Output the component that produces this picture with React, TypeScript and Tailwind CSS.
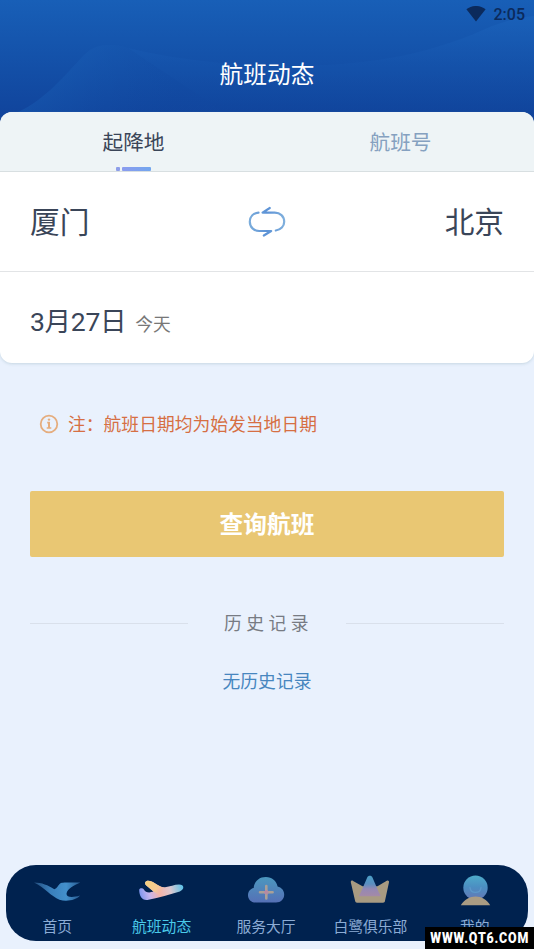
import React from 'react';

// ── Icons ────────────────────────────────────────

const IconWifi = () => (
  <svg width="20" height="16" viewBox="0 0 20 16" fill="#0b2a5c">
    <path d="M.4 3.2C6-1.1 14-1.1 19.6 3.2L10 15.4z" />
  </svg>
);

const IconSwap = () => (
  <svg width="40" height="32" viewBox="0 0 40 32" fill="none" strokeWidth="2.2" strokeLinecap="round" strokeLinejoin="round">
    <defs>
      <linearGradient id="swap" x1="0" y1="0" x2="40" y2="0" gradientUnits="userSpaceOnUse">
        <stop stopColor="#7fb0dc" />
        <stop offset=".5" stopColor="#5c92d6" />
        <stop offset="1" stopColor="#85b4de" />
      </linearGradient>
    </defs>
    <path stroke="url(#swap)" d="M11.500 6.700C6.200 7.200 2.800 10.800 2.800 15.700c0 5.400 4.100 9.300 9.400 9.300h12l-7.400 4.500" />
    <path stroke="url(#swap)" d="M28.800 24.500c5-.6 8.400-4.300 8.400-8.800 0-5.400-4.100-9.100-9.400-9.100H15.500L22.800 2" />
  </svg>
);

const IconInfo = () => (
  <svg width="20" height="20" viewBox="0 0 20 20" fill="none" stroke="#e5ad7e">
    <circle cx="10" cy="10" r="8.3" strokeWidth="1.8" />
    <path d="M8.200 8.600H10v5.200M7.700 14h4.600" strokeWidth="1.600" />
    <path d="M10 8v6" strokeWidth="2" />
    <circle cx="10" cy="5.600" r="1.200" fill="#e5ad7e" stroke="none" />
  </svg>
);

const IconBird = () => (
  <svg width="50" height="32" viewBox="0 0 50 32">
    <defs>
      <linearGradient id="bird" x1="2" y1="0" x2="48" y2="0" gradientUnits="userSpaceOnUse">
        <stop stopColor="#244f80" />
        <stop offset=".35" stopColor="#397eba" />
        <stop offset=".7" stopColor="#4390cc" />
        <stop offset="1" stopColor="#285b91" />
      </linearGradient>
    </defs>
    <path fill="url(#bird)" d="M2 8.500c8 0 13.700 2.800 20.300 6.700 3-.8 3.500-3.700 6.200-5.900C30.200 8.200 41 8.700 48.300 8.500 43 11.200 35.200 14 34.500 19.800c-.1 3.700 6.300 4 13.500 1.700-3.500 4.500-13.500 6.600-20.500 4.200C19.200 22.500 12.500 13.500 2 8.500z" />
  </svg>
);

const IconPlane = () => (
  <svg width="50" height="32" viewBox="0 0 50 32">
    <defs>
      <linearGradient id="plane" x1="3" y1="24" x2="46" y2="12" gradientUnits="userSpaceOnUse">
        <stop stopColor="#7994f0" />
        <stop offset=".22" stopColor="#c6b5ef" />
        <stop offset=".45" stopColor="#f4b3a8" />
        <stop offset=".7" stopColor="#dcc8d0" />
        <stop offset="1" stopColor="#59c2e8" />
      </linearGradient>
      <linearGradient id="wing" x1="10" y1="8" x2="25" y2="20" gradientUnits="userSpaceOnUse">
        <stop stopColor="#f5cf80" />
        <stop offset=".6" stopColor="#f5c994" />
        <stop offset="1" stopColor="#f2b6a5" stopOpacity="0" />
      </linearGradient>
    </defs>
    <path fill="url(#plane)" d="M2.200 16c0-2.200 3.400-2.300 4.500-.7 1.300 2.200 3 3.200 5.500 3.200l4.300-1-7.200-6c-2.200-2-1.200-4.800 2-4.700 2.300.1 4.500 1.200 6.500 2.400 3.600 2 6.200 4.200 10.200 4 5-.3 9.300-2.600 14-2.600 5.800 0 5.500 5.300.8 6.800-10.300 3.300-20.300 6-31.300 8.300C5.200 27.100 2.200 22 2.200 16z" />
    <path fill="url(#wing)" d="m16.500 17.500-7.200-6c-2.200-2-1.200-4.800 2-4.700 2.300.1 4.500 1.200 6.500 2.400 3.600 2 6.200 4.200 10.200 4l-6 7.700z" />
  </svg>
);

const IconCloud = () => (
  <svg width="50" height="32" viewBox="0 0 50 32">
    <defs>
      <linearGradient id="cloud" x1="25" y1="3" x2="25" y2="28" gradientUnits="userSpaceOnUse">
        <stop stopColor="#4b98bf" />
        <stop offset="1" stopColor="#5571b6" />
      </linearGradient>
    </defs>
    <path fill="url(#cloud)" d="M14.500 28.500C10 28.500 7 25.300 7 21.200c0-3.500 2.200-6.500 5.700-7.200C13.200 7.200 18.300 3 24.800 3c6.200 0 10.700 4 11.800 9.500 3.900.9 6.600 4.100 6.600 8 0 4.600-3.400 8-8.200 8z" />
    <path stroke="#a9a098" strokeWidth="2.600" strokeLinecap="round" d="M25.300 12v12.500M19 18.200h12.600" />
    <path stroke="#b58aa4" strokeWidth="2.600" d="M25.300 16v4.500M23 18.200h4.600" />
  </svg>
);

const IconCrown = () => (
  <svg width="50" height="32" viewBox="0 0 50 32">
    <defs>
      <linearGradient id="crown" x1="25" y1="2" x2="25" y2="22" gradientUnits="userSpaceOnUse">
        <stop stopColor="#4b9fc7" />
        <stop offset=".4" stopColor="#5b8ec0" />
        <stop offset=".65" stopColor="#9488b4" />
        <stop offset="1" stopColor="#a48aa7" />
      </linearGradient>
    </defs>
    <path fill="#a89b82" d="M5.800 8.200c-.2-1.400 1.200-2 2.300-1.300l9.400 5.300h15l9.300-5.400c1.200-.7 2.500.1 2.200 1.500l-4.100 19c-.2 1-.8 1.400-1.800 1.400H12c-1 0-1.600-.5-1.800-1.400z" />
    <path fill="url(#crown)" d="M14.800 22.300c-.8 0-1-.7-.5-1.300 2.200-3.200 5.700-12.800 7.800-17.300 1-2.600 4.500-2.600 5.500 0 2.100 4.500 5.600 14.100 7.800 17.300.4.700.2 1.300-.6 1.300z" />
  </svg>
);

const IconUser = () => (
  <svg width="50" height="32" viewBox="0 0 50 32">
    <defs>
      <linearGradient id="head" x1="25" y1="1" x2="25" y2="25" gradientUnits="userSpaceOnUse">
        <stop stopColor="#4eadca" />
        <stop offset=".5" stopColor="#4b8ec2" />
        <stop offset="1" stopColor="#6379b6" />
      </linearGradient>
    </defs>
    <circle cx="25.500" cy="13.700" r="12.200" fill="url(#head)" />
    <path d="M20 13.500c.5 6.500 10.500 6.500 11 0" fill="none" stroke="#5c98ca" strokeWidth="1.400" strokeLinecap="round" />
    <path fill="#aa9c83" d="M10.800 31.300c3.400-5.300 9-8.700 14.800-8.700s11.300 3.400 14.600 8.700z" />
  </svg>
);

interface NavItem {
  icon: React.ReactNode;
  label: string;
  active?: boolean;
}

const NAV_ITEMS: NavItem[] = [
  { icon: <IconBird />,  label: '首页' },
  { icon: <IconPlane />, label: '航班动态', active: true },
  { icon: <IconCloud />, label: '服务大厅' },
  { icon: <IconCrown />, label: '白鹭俱乐部' },
  { icon: <IconUser />,  label: '我的' },
];

const App: React.FC = () => (
  <div className="relative flex h-[949px] w-[534px] flex-col overflow-hidden bg-[#e9f1fd] font-[Roboto,'Noto_Sans_CJK_SC',sans-serif]">

    {/* ── HEADER ── */}
    <header className="relative h-[124px] shrink-0 bg-linear-to-b from-[#185fb7] to-[#10429a]">
      <svg className="absolute inset-0" width="534" height="124" viewBox="0 0 534 124">
        <defs>
          <linearGradient id="waveA" x1="0" y1="20" x2="0" y2="112" gradientUnits="userSpaceOnUse">
            <stop stopColor="#1b62ba" stopOpacity=".7" />
            <stop offset="1" stopColor="#10459d" stopOpacity=".4" />
          </linearGradient>
          <linearGradient id="waveB" x1="100" y1="44" x2="160" y2="112" gradientUnits="userSpaceOnUse">
            <stop stopColor="#185ab1" stopOpacity=".5" />
            <stop offset="1" stopColor="#124aa3" stopOpacity=".1" />
          </linearGradient>
        </defs>
        <path fill="url(#waveA)" d="M128 48c50 12 105 18 160 18 90 0 150-15 204-40 14-5 27-9 42-10v108H240C200 95 160 70 128 48z" />
        <path fill="url(#waveB)" d="M18 112c28-13 47-37 66-57 12-12 28-12 44-7 32 22 72 47 112 76H0z" />
      </svg>
      <div className="relative flex h-7 items-center justify-end gap-2 pr-[9px]">
        <IconWifi />
        <span className="pt-px text-[16px] leading-none font-medium text-[#0b2a5c]">2:05</span>
      </div>
      <h1 className="relative mt-[31px] text-center text-[23.700px] leading-8 font-normal text-white">航班动态</h1>
    </header>

    {/* ── SEARCH CARD ── */}
    <section className="relative -mt-3 shrink-0 overflow-hidden rounded-xl bg-white text-[#3a4558] shadow-[0_1px_3px_rgba(120,155,165,0.3)]">
      <div className="grid h-[60px] grid-cols-2 border-b border-[#d8dfe1] bg-[#eef4f6] text-center text-[20.700px]">
        <button className="flex flex-col items-center justify-between pt-[15px]">
          <span className="leading-8">起降地</span>
          <span className="flex gap-0.5">
            <i className="h-1 w-1 rounded-[1px] bg-[#8d9ee9]" />
            <i className="h-1 w-[29px] rounded-[1px] bg-linear-to-r from-[#8b9cef] to-[#72a6ee]" />
          </span>
        </button>
        <button className="flex justify-center pt-[15px] leading-8 text-[#85a1c0]">航班号</button>
      </div>
      <div className="flex h-[100px] items-center justify-between border-b border-[#e2e4e6] px-[30px] text-[29.700px]">
        <span className="pt-1">厦门</span>
        <IconSwap />
        <span className="pt-1">北京</span>
      </div>
      <div className="flex h-[91px] items-center px-[30px]">
        <div className="flex items-baseline gap-[9px] pt-[9px]">
          <span className="text-[26.500px] leading-10 tracking-[-0.300px]">3月27日</span>
          <span className="text-[17.800px] text-[#777]">今天</span>
        </div>
      </div>
    </section>

    {/* Notice */}
    <div className="mt-[47px] flex h-7 shrink-0 items-center gap-[9px] pl-[39px]">
      <IconInfo />
      <span className="pt-0.5 text-[17.800px] leading-7 text-[#d66f43]">注：航班日期均为始发当地日期</span>
    </div>

    <button className="mx-[30px] mt-[53px] h-[66px] shrink-0 rounded-[2px] bg-[#e9c773] pt-1 text-[23.700px] font-bold text-white">
      查询航班
    </button>

    {/* ── HISTORY ── */}
    <div className="mx-[30px] mt-[52px] flex h-7 shrink-0 items-center justify-between">
      <span className="h-px w-[158px] bg-[#d9e0eb]" />
      <span className="pt-[3px] pl-[3px] text-[17.800px] tracking-[4.500px] text-[#777b83]">历史记录</span>
      <span className="h-px w-[158px] bg-[#d9e0eb]" />
    </div>
    <p className="mt-[31px] shrink-0 text-center text-[17.800px] leading-7 text-[#4786bf]">无历史记录</p>

    {/* ── BOTTOM NAV ── */}
    <nav className="mx-1.5 mt-auto mb-2 h-[76px] shrink-0 rounded-[30px] bg-[#00224f]">
      <div className="mr-px -ml-px grid grid-cols-5">
        {NAV_ITEMS.map((item) => (
          <a key={item.label} className="flex flex-col items-center pt-[9px]">
            {item.icon}
            <span className={`mt-2.5 text-[14.800px] leading-[22px] ${item.active ? 'text-[#4acaea]' : 'text-[#8cacd5]'}`}>
              {item.label}
            </span>
          </a>
        ))}
      </div>
    </nav>

    {/* Site mark */}
    <div className="absolute right-0 bottom-0 flex h-[22px] w-[109px] items-center justify-center bg-black">
      <span className="scale-x-[0.8] pt-0.5 text-[15.500px] leading-none font-black tracking-[1px] whitespace-nowrap text-white">
        WWW.QT6.COM
      </span>
    </div>
  </div>
);

export default App;
